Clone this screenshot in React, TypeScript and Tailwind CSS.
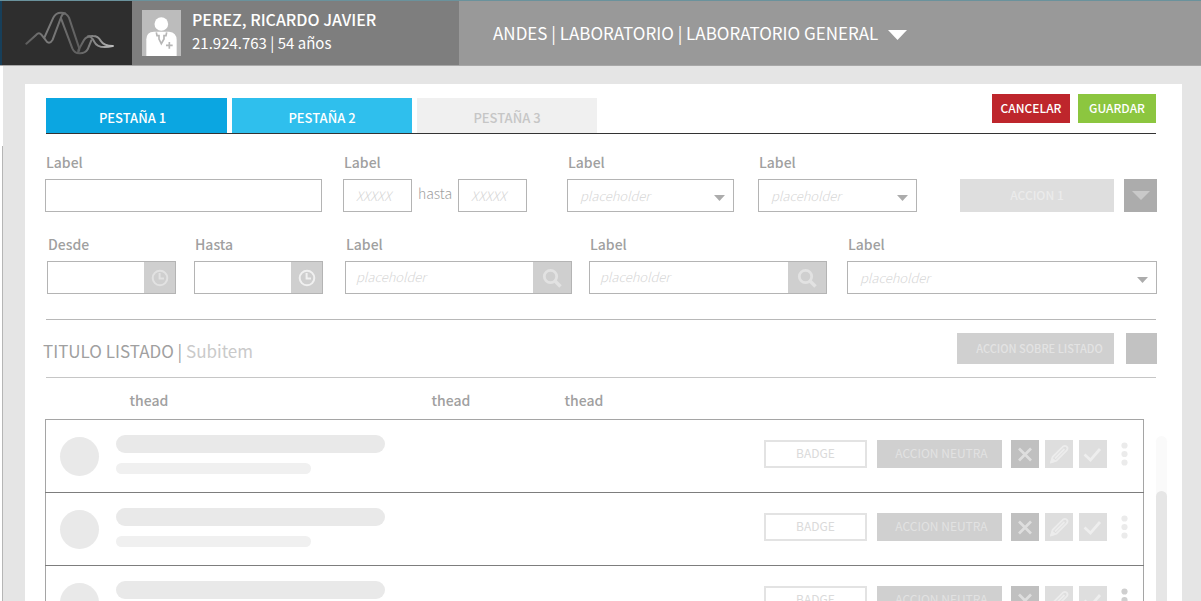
import { useId, type ReactNode } from 'react';

function Logo() {
  return (
    <svg viewBox="0 0 270 132" className="h-11 w-[90px]" fill="none" strokeLinecap="round" strokeLinejoin="round" strokeWidth="6" aria-label="Andes">
      <defs>
        <linearGradient id="ridge" x1="0" y1="0" x2="270" y2="0" gradientUnits="userSpaceOnUse">
          <stop offset="0" stopColor="#5c5c5c" />
          <stop offset="0.25" stopColor="#7c7c7c" />
          <stop offset="0.6" stopColor="#5e5e5e" />
          <stop offset="0.85" stopColor="#9a9a9a" />
          <stop offset="1" stopColor="#c4c4c4" />
        </linearGradient>
      </defs>
      <g stroke="url(#ridge)">
        <path d="M4 98 L34 71 Q42 62 49 71 L61 86 Q72 104 83 86 L109 17 Q113 7 120 7" />
        <path d="M58 80 L85 20 Q92 5 108 5 Q125 5 132 20 L162 110 Q165 119 158 125" />
        <path d="M108 22 L142 112 Q149 128 165 127 Q181 127 188 115 L199 88" />
        <path d="M160 118 L177 87 Q185 74 204 75 Q219 75 227 89 Q236 104 263 105" />
        <path d="M189 76 Q199 76 207 91 Q219 116 263 105" />
      </g>
    </svg>
  );
}

function Doctor() {
  return (
    <svg viewBox="0 0 117 138" className="h-[46px] w-[39px]" aria-hidden="true">
      <rect width="117" height="138" fill="#bcbcbc" />
      <circle cx="58" cy="42" r="20.5" fill="#fff" />
      <path d="M13 138V88Q13 66 36 65H81Q104 67 104 90V138Z" fill="#fff" />
      <path d="M43 67L45 77H51V87L58 101L66 87V77H72L74 67" fill="none" stroke="#b6b6b6" strokeWidth="5" />
      <path d="M82 96V116M72 106H92" stroke="#b6b6b6" strokeWidth="5" />
    </svg>
  );
}

function Triangle({ className }: { className: string }) {
  return (
    <svg viewBox="0 0 20 10" preserveAspectRatio="none" className={className} fill="currentColor" aria-hidden="true">
      <path d="M0 0H20L10 10Z" />
    </svg>
  );
}

function Clock() {
  return (
    <svg viewBox="0 0 18 18" className="size-[18px]" fill="none" stroke="currentColor" strokeWidth="2" aria-hidden="true">
      <circle cx="9" cy="9" r="7.3" />
      <path d="M8.6 4V9.6H13" />
    </svg>
  );
}

function Search() {
  return (
    <svg viewBox="0 0 20 20" className="size-5" fill="none" stroke="currentColor" strokeWidth="2.8" aria-hidden="true">
      <circle cx="8.5" cy="8.5" r="6.2" />
      <path d="M13 13L18.5 18.5" strokeWidth="3.4" />
    </svg>
  );
}

const labelClass = 'block pl-px text-[14px] leading-5 font-medium text-[#a0a0a0]';
const boxClass = 'h-[33px] w-full min-w-0 border border-[#b4b4b4] bg-white text-[13px]';
const placeholderClass = 'font-light italic placeholder:text-[#d6d6d6]';

function TextField({ label, className }: { label: string; className: string }) {
  const id = useId();
  return (
    <div className={`min-w-0 ${className}`}>
      <label htmlFor={id} className={labelClass}>{label}</label>
      <input id={id} className={`mt-[7px] block px-3 ${boxClass}`} />
    </div>
  );
}

function SelectField({ label, className }: { label: string; className: string }) {
  const id = useId();
  return (
    <div className={`min-w-0 ${className}`}>
      <label htmlFor={id} className={labelClass}>{label}</label>
      <div className="relative mt-[7px]">
        <select id={id} className={`block appearance-none px-3 font-light text-[#d6d6d6] italic ${boxClass}`}>
          <option>placeholder</option>
        </select>
        <Triangle className="pointer-events-none absolute top-4 right-[9px] h-1.5 w-[11px] text-[#acacac]" />
      </div>
    </div>
  );
}

function ActionField({ label, placeholder, action, icon, tone, className }: {
  label: string; placeholder?: string; action: string; icon: ReactNode; tone: string; className: string;
}) {
  const id = useId();
  return (
    <div className={`min-w-0 ${className}`}>
      <label htmlFor={id} className={labelClass}>{label}</label>
      <div className="mt-[7px] flex h-[33px] border border-[#b4b4b4]">
        <input id={id} placeholder={placeholder} className={`w-full min-w-0 flex-1 px-2.5 pb-0.5 text-[13px] ${placeholderClass}`} />
        <button aria-label={action} className={`flex shrink-0 items-center justify-center bg-[#cfcfcf] ${tone}`}>{icon}</button>
      </div>
    </div>
  );
}

function IconButton({ label, className, children }: { label: string; className: string; children: ReactNode }) {
  return (
    <button aria-label={label} className={`flex size-7 shrink-0 items-center justify-center ${className}`}>
      <svg viewBox="0 0 28 28" className="size-7" fill="none" stroke="currentColor" aria-hidden="true">{children}</svg>
    </button>
  );
}

function Row({ dots }: { dots: string }) {
  return (
    <tr className="h-[73px] border border-[#7d7d7d] border-x-[#a5a5a5] first:border-t-[#a5a5a5]">
      <td className="pl-3.5"><div className="mt-0.5 size-[39px] rounded-full bg-[#e9e9e9]" /></td>
      <td>
        <div className="-mt-[3px] -ml-px h-[18px] w-[269px] rounded-full bg-[#e9e9e9]" />
        <div className="mt-2.5 -ml-px h-[11px] w-[195px] rounded-full bg-[#f0f0f0]" />
      </td>
      <td />
      <td />
      <td>
        <div className="-mt-[3px] flex items-center justify-end pr-[15px] text-[12px]">
          <span className="flex h-7 w-[103px] items-center justify-center border-2 border-[#e3e3e3] pb-0.5 text-[#dadada]">BADGE</span>
          <button className="ml-2.5 h-7 w-[125px] bg-[#d0d0d0] pb-0.5 pl-1 text-[#e2e2e2]">ACCION NEUTRA</button>
          <div className="ml-[9px] flex gap-1.5">
            <IconButton label="Eliminar" className="bg-[#c0c0c0] text-[#dedede]">
              <path d="M8 8.5L20 20.5M20 8.5L8 20.5" strokeWidth="2.7" />
            </IconButton>
            <IconButton label="Editar" className="bg-[#dedede] text-[#ececec]">
              <path d="M6 22.5L7.6 17L18 6.6Q20 5 21.7 6.7Q23.4 8.4 21.7 10.4L11.5 20.6Z" strokeWidth="1.8" strokeLinejoin="round" />
              <path d="M10 18.5L19.5 9" strokeWidth="1.8" />
              <path d="M5 23.5L7 17.5L11.5 21Z" fill="currentColor" stroke="none" />
            </IconButton>
            <IconButton label="Confirmar" className="bg-[#dedede] text-[#eeeeee]">
              <path d="M5.5 14.5L11.5 20L21 9" strokeWidth="2.7" />
            </IconButton>
          </div>
          <button aria-label="Más opciones" className={`ml-3.5 ${dots}`}>
            <svg viewBox="0 0 7 24" className="h-6 w-[7px]" fill="currentColor" aria-hidden="true">
              <circle cx="3.5" cy="3.5" r="3.1" />
              <circle cx="3.5" cy="12" r="3.1" />
              <circle cx="3.5" cy="20.5" r="3.1" />
            </svg>
          </button>
        </div>
      </td>
    </tr>
  );
}

export default function App() {
  return (
    <div className="flex h-screen flex-col overflow-hidden bg-white font-['Noto_Sans_CJK_SC',sans-serif]">
      <header className="flex h-[66px] shrink-0 border-t border-b border-t-[#6a929c] border-b-[#a8a8a8] bg-[#999999] text-white">
        <div className="flex w-[132px] shrink-0 items-center border-l-2 border-[#173f5a] bg-[#2e2e2e] pl-[23px]">
          <Logo />
        </div>
        <div className="flex w-[327px] shrink-0 items-center gap-[11px] bg-[#7e7e7e] pl-2.5">
          <Doctor />
          <div className="-mt-1 leading-6">
            <p className="text-[16px] font-medium">PEREZ, RICARDO JAVIER</p>
            <p className="text-[15px]">21.924.763 | 54 años</p>
          </div>
        </div>
        <button className="flex items-center gap-2.5 pl-[34px] text-[17px]">
          ANDES | LABORATORIO | LABORATORIO GENERAL
          <Triangle className="mt-1 h-2.5 w-[19px]" />
        </button>
      </header>

      <div className="flex min-h-0 flex-1">
        <div className="flex w-[3px] shrink-0 pt-20">
          <div className="flex-1 border-r border-[#b5b5b5]" />
        </div>
        <main className="flex min-w-0 flex-1 bg-[#e5e5e5] pt-[18px] pr-[19px] pl-[22px]">
          <div className="min-w-0 flex-1 overflow-hidden bg-white pl-5">
            <div className="pr-[25px]">
              <div className="mx-px flex items-start justify-between border-b border-[#333333] pt-2.5">
                <nav className="mt-1 flex gap-[5px] text-[13px] font-medium">
                  <button className="h-[35px] w-[181px] bg-[#0ba6e1] pt-1 pr-2 text-white">PESTAÑA 1</button>
                  <button className="h-[35px] w-[180px] bg-[#2fbfed] pt-1 text-white">PESTAÑA 2</button>
                  <button className="h-[35px] w-[180px] bg-[#f0f0f0] pt-1 text-[#c6c6c6]">PESTAÑA 3</button>
                </nav>
                <div className="flex gap-2 text-[12px] font-medium text-white">
                  <button className="h-[29px] w-[78px] bg-[#be262c] pb-0.5">CANCELAR</button>
                  <button className="h-[29px] w-[78px] bg-[#8cc63f] pb-0.5">GUARDAR</button>
                </div>
              </div>

              <form className="mx-px border-b border-[#b8b8b8] pt-[18px] pb-[25px]" onSubmit={(e) => e.preventDefault()}>
                <div className="-mx-px flex items-end">
                  <TextField label="Label" className="flex-[277]" />
                  <div className="ml-[21px] min-w-0 flex-[184]">
                    <label htmlFor="range-from" className={labelClass}>Label</label>
                    <div className="mt-[7px] flex items-center gap-1.5">
                      <input id="range-from" placeholder="XXXXX" className={`flex-1 px-3 ${boxClass} ${placeholderClass}`} />
                      <label htmlFor="range-to" className="-mt-1 text-[14px] font-light text-[#a0a0a0]">hasta</label>
                      <input id="range-to" placeholder="XXXXX" className={`flex-1 px-3 ${boxClass} ${placeholderClass}`} />
                    </div>
                  </div>
                  <SelectField label="Label" className="ml-10 flex-[167]" />
                  <SelectField label="Label" className="ml-6 flex-[159]" />
                  <div className="ml-[43px] flex min-w-0 flex-[197] gap-2.5">
                    <button className="h-[33px] flex-1 bg-[#dedede] pb-0.5 text-[12px] font-medium text-[#ebebeb]">ACCION 1</button>
                    <button aria-label="Más acciones" className="flex h-[33px] w-[33px] items-center justify-center bg-[#acacac] text-[#c9c9c9]">
                      <Triangle className="h-[9px] w-[18px]" />
                    </button>
                  </div>
                </div>

                <div className="-mr-px ml-px mt-[22px] flex items-end">
                  <ActionField label="Desde" action="Elegir hora desde" icon={<Clock />} tone="w-[31px] text-[#e2e2e2]" className="flex-[129]" />
                  <ActionField label="Hasta" action="Elegir hora hasta" icon={<Clock />} tone="w-[31px] text-[#f0f0f0]" className="ml-[18px] flex-[129]" />
                  <ActionField label="Label" placeholder="placeholder" action="Buscar" icon={<Search />} tone="w-[38px] text-[#e2e2e2]" className="ml-[22px] flex-[227]" />
                  <ActionField label="Label" placeholder="placeholder" action="Buscar" icon={<Search />} tone="w-[38px] text-[#e2e2e2]" className="ml-[17px] flex-[238]" />
                  <SelectField label="Label" className="ml-5 flex-[310]" />
                </div>
              </form>

              <div className="mx-px flex h-[58px] items-center justify-between border-b border-[#c6c6c6]">
                <h1 className="-ml-[3px] mt-1 text-[17px] text-[#a0a0a0]">
                  TITULO LISTADO | <span className="text-[#cacaca]">Subitem</span>
                </h1>
                <div className="-mr-px flex gap-3">
                  <button className="h-[31px] w-[157px] bg-[#d0d0d0] pl-2 text-[11px] font-medium text-[#e3e3e3]">ACCION SOBRE LISTADO</button>
                  <button aria-label="Opciones del listado" className="h-[31px] w-[31px] bg-[#c2c2c2]" />
                </div>
              </div>
            </div>

            <div className="flex gap-3 pr-[15px]">
              <table className="min-w-0 flex-1 table-fixed border-collapse">
                <thead>
                  <tr className="h-[41px] text-left text-[14px] text-[#a0a0a0]">
                    <td className="w-[71px]" />
                    <th className="w-[315px] pt-1 pl-[13px] font-medium">thead</th>
                    <th className="w-[133px] pt-1 font-medium">thead</th>
                    <th className="w-[133px] pt-1 font-medium">thead</th>
                    <td />
                  </tr>
                </thead>
                <tbody>
                  <Row dots="text-[#ebebeb]" />
                  <Row dots="text-[#ebebeb]" />
                  <Row dots="text-[#cfcfcf]" />
                </tbody>
              </table>
              <div className="mt-[58px] w-[11px] shrink-0 rounded-full bg-[#fafafa] pt-[55px]">
                <div className="h-full rounded-full bg-[#e6e6e6]" />
              </div>
            </div>
          </div>
        </main>
      </div>
    </div>
  );
}
